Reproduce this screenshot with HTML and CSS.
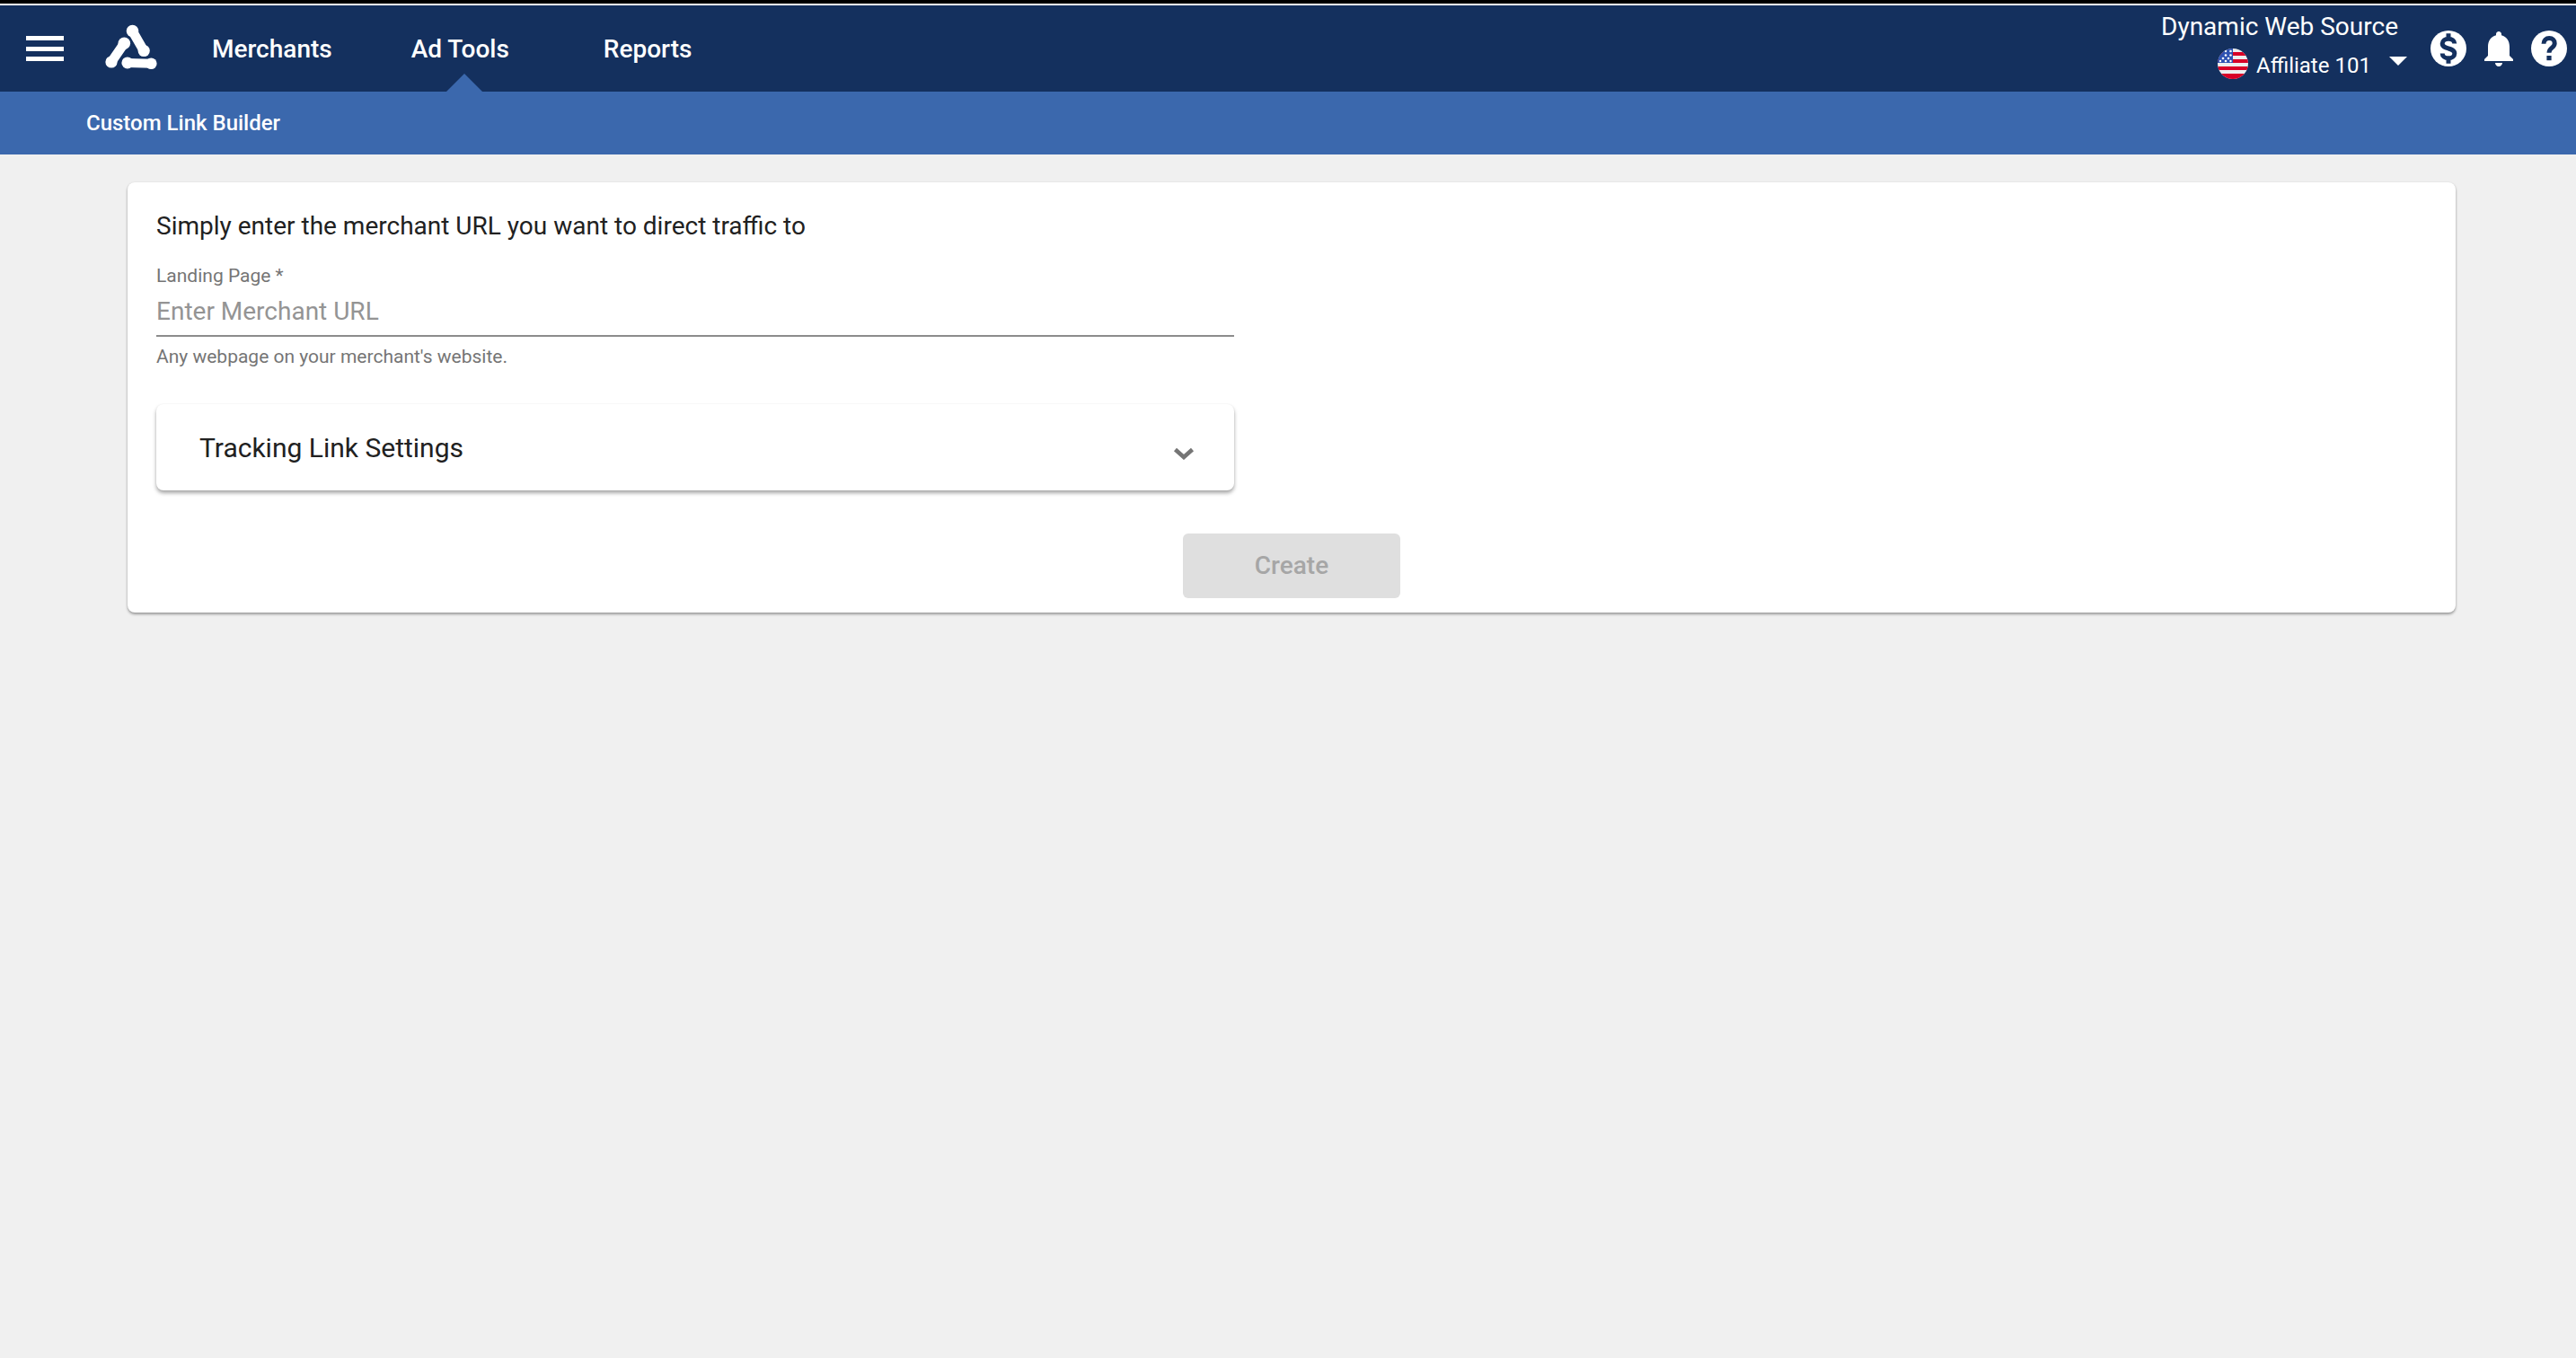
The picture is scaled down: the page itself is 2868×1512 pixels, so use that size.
FILE: index.html
```html
<!DOCTYPE html>
<html lang="en">
<head>
<meta charset="utf-8">
<title>Custom Link Builder</title>
<link rel="stylesheet" href="styles.css">
</head>
<body>
<div class="top-strip"></div>
<header class="navbar">
  <button class="burger" aria-label="Menu"><span></span><span></span><span></span></button>
  <svg class="logo" viewBox="0 0 60 56" aria-label="Logo">
    <g fill="#fff" stroke="#fff" stroke-linecap="round">
      <path d="M31.7 10 44 31.3" stroke-width="10.5" fill="none"/>
      <path d="M22.3 23.3 8 44" stroke-width="10.5" fill="none"/>
      <path d="M25.7 45 52.3 45.7" stroke-width="10" fill="none"/>
      <circle cx="31.5" cy="9.5" r="6.8" stroke="none"/>
      <circle cx="44.2" cy="31.5" r="6.6" stroke="none"/>
      <circle cx="22.3" cy="23.3" r="6.8" stroke="none"/>
      <circle cx="8" cy="44" r="6.6" stroke="none"/>
      <circle cx="25.9" cy="44.9" r="6.5" stroke="none"/>
      <circle cx="52.3" cy="45.7" r="6.3" stroke="none"/>
    </g>
  </svg>
  <nav class="main-nav">
    <a class="nav-item nav-merchants">Merchants</a>
    <a class="nav-item nav-adtools">Ad Tools<i class="notch"></i></a>
    <a class="nav-item nav-reports">Reports</a>
  </nav>
  <div class="account">
    <div class="account-name">Dynamic Web Source</div>
    <div class="account-row">
      <svg class="flag" viewBox="0 0 34 34">
        <defs><clipPath id="flagclip"><circle cx="17" cy="17" r="17"/></clipPath></defs>
        <g clip-path="url(#flagclip)">
          <rect width="34" height="34" fill="#eeeeee"/>
          <rect y="4" width="34" height="4" fill="#d80027"/>
          <rect y="12" width="34" height="4" fill="#d80027"/>
          <rect y="20" width="34" height="4" fill="#d80027"/>
          <rect y="28" width="34" height="6" fill="#d80027"/>
          <rect width="17" height="16" fill="#2e52b2"/>
          <g fill="#fff">
            <circle cx="6" cy="11" r="1.3"/><circle cx="12" cy="11" r="1.3"/><circle cx="3" cy="14" r="1.2"/>
            <circle cx="9" cy="14" r="1.3"/><circle cx="14.5" cy="14" r="1.2"/><circle cx="9" cy="7.5" r="1.3"/>
            <circle cx="14.5" cy="7.5" r="1.3"/><circle cx="14.5" cy="3" r="1.3"/><circle cx="9" cy="3" r="1.2"/>
          </g>
        </g>
      </svg>
      <span class="account-label">Affiliate 101</span>
      <i class="caret"></i>
    </div>
  </div>
  <div class="nav-icons">
    <svg class="icon" viewBox="0 0 24 24"><circle cx="12" cy="12" r="10"/><path class="glyph" d="M15.4 9.3c0-1.7-1.5-2.7-3.4-2.7s-3.4 1-3.4 2.7c0 1.8 1.6 2.2 3.4 2.7s3.4 1 3.4 2.7-1.5 2.7-3.4 2.7-3.4-1-3.4-2.7M12 3.6v3M12 17.4v3"/></svg>
    <svg class="icon" viewBox="0 0 24 24"><path d="M12 22c1.1 0 2-.9 2-2h-4c0 1.1.89 2 2 2zm6-6v-5c0-3.07-1.64-5.64-4.5-6.32V4c0-.83-.67-1.5-1.5-1.5s-1.5.67-1.5 1.5v.68C7.63 5.36 6 7.92 6 11v5l-2 2v1h16v-1l-2-2z"/></svg>
    <svg class="icon" viewBox="0 0 24 24"><circle cx="12" cy="12" r="10"/><path class="glyph" d="M9 9.4c0-1.9 1.3-3.1 3.1-3.1s3 1.1 3 2.8c0 2.6-3.1 2.4-3.1 5.3"/><rect class="glyph-dot" x="10.7" y="16" width="2.6" height="2.6"/></svg>
  </div>
</header>
<div class="subnav"><a class="subnav-item">Custom Link Builder</a></div>
<main class="content">
  <section class="card">
    <h1 class="lead">Simply enter the merchant URL you want to direct traffic to</h1>
    <div class="field">
      <div class="field-label">Landing Page *</div>
      <div class="field-input">Enter Merchant URL</div>
      <div class="field-help">Any webpage on your merchant's website.</div>
    </div>
    <div class="accordion">
      <span class="accordion-title">Tracking Link Settings</span>
      <svg class="chevron" viewBox="0 0 24 14"><path d="M2.5 2.5 12 11l9.5-8.5" fill="none" stroke="#757575" stroke-width="4.6"/></svg>
    </div>
    <div class="actions"><button class="create" disabled>Create</button></div>
  </section>
</main>
</body>
</html>
```
FILE: styles.css
```css
* { box-sizing: border-box; }
html, body { margin: 0; padding: 0; }
body {
  width: 2868px;
  height: 1512px;
  overflow: hidden;
  background: #f0f0f0;
  font-family: Roboto, "Liberation Sans", sans-serif;
  color: #212121;
}
.top-strip {
  height: 6px;
  background: #000;
  border-bottom: 2px solid #fff;
}
.navbar {
  height: 96px;
  background: #14305e;
  color: #fff;
  display: flex;
  align-items: center;
  padding-left: 29px;
}
.burger {
  width: 42px;
  height: 28px;
  padding: 0;
  background: none;
  border: 0;
  display: flex;
  flex-direction: column;
  justify-content: space-between;
}
.burger span { display: block; height: 5px; background: #fff; }
.logo { width: 60px; height: 56px; margin-left: 45px; margin-top: -2px; }
.main-nav { display: flex; margin-left: 60px; height: 96px; }
.nav-item {
  position: relative;
  font-size: 28px;
  font-weight: 500;
  line-height: 97px;
  color: #fff;
}
.nav-adtools { margin-left: 88px; }
.nav-reports { margin-left: 105px; }
.notch {
  position: absolute;
  left: 39px;
  bottom: 0;
  width: 0;
  height: 0;
  border-left: 20px solid transparent;
  border-right: 20px solid transparent;
  border-bottom: 20px solid #3b68ad;
}
.account {
  margin-left: auto;
  display: flex;
  flex-direction: column;
  align-items: flex-end;
  width: 274px;
}
.account-name {
  font-size: 28px;
  line-height: 36px;
  margin-right: 10px;
  margin-top: -5px;
  white-space: nowrap;
}
.account-row { display: flex; align-items: center; height: 40px; width: 211px; margin-top: 3px; }
.flag { width: 34px; height: 34px; flex: none; }
.account-label { font-size: 24px; line-height: 34px; margin-left: 9px; margin-top: 3px; white-space: nowrap; }
.caret {
  margin-left: auto;
  margin-top: -6px;
  width: 0;
  height: 0;
  border-left: 10px solid transparent;
  border-right: 10px solid transparent;
  border-top: 10px solid #fff;
}
.nav-icons { display: flex; gap: 8px; margin-left: 22px; padding-right: 6px; }
.icon { width: 48px; height: 48px; fill: #fff; }
.glyph { fill: none; stroke: #14305e; stroke-width: 2.5; }
.glyph-dot { fill: #14305e; }
.subnav {
  height: 70px;
  background: #3b68ad;
  padding-left: 96px;
  display: flex;
  align-items: center;
}
.subnav-item { font-size: 24px; font-weight: 500; color: #fff; }
.content { padding: 31px 134px 0 142px; }
.card {
  height: 479px;
  background: #fff;
  border-radius: 8px;
  padding: 29px 32px 16px;
  box-shadow: 0 2px 3px rgba(0,0,0,.35), 0 0 2px rgba(0,0,0,.08);
  display: flex;
  flex-direction: column;
}
.lead { margin: 0; font-size: 28px; font-weight: 400; line-height: 40px; color: #212121; }
.field { width: 1200px; margin-top: 21px; }
.field-label { font-size: 21px; line-height: 28px; color: #757575; }
.field-input {
  height: 54px;
  font-size: 28px;
  line-height: 52px;
  color: #949494;
  border-bottom: 2px solid #8c8c8c;
}
.field-help { font-size: 21px; line-height: 28px; margin-top: 8px; color: #757575; }
.accordion {
  width: 1200px;
  height: 96px;
  margin-top: 39px;
  padding: 0 44px 0 48px;
  display: flex;
  align-items: center;
  justify-content: space-between;
  border-radius: 8px;
  background: #fff;
  box-shadow: 0 3px 4px rgba(0,0,0,.35), 0 0 2px rgba(0,0,0,.05);
}
.accordion-title { font-size: 30px; color: #212121; }
.chevron { width: 24px; height: 14px; margin-top: 14px; }
.actions { margin-top: auto; display: flex; justify-content: center; }
.create {
  width: 242px;
  height: 72px;
  padding: 0 0 2px;
  border: 0;
  border-radius: 6px;
  background: #dfdfdf;
  color: #a6a6a6;
  font-family: inherit;
  font-size: 28px;
  font-weight: 500;
}
```
